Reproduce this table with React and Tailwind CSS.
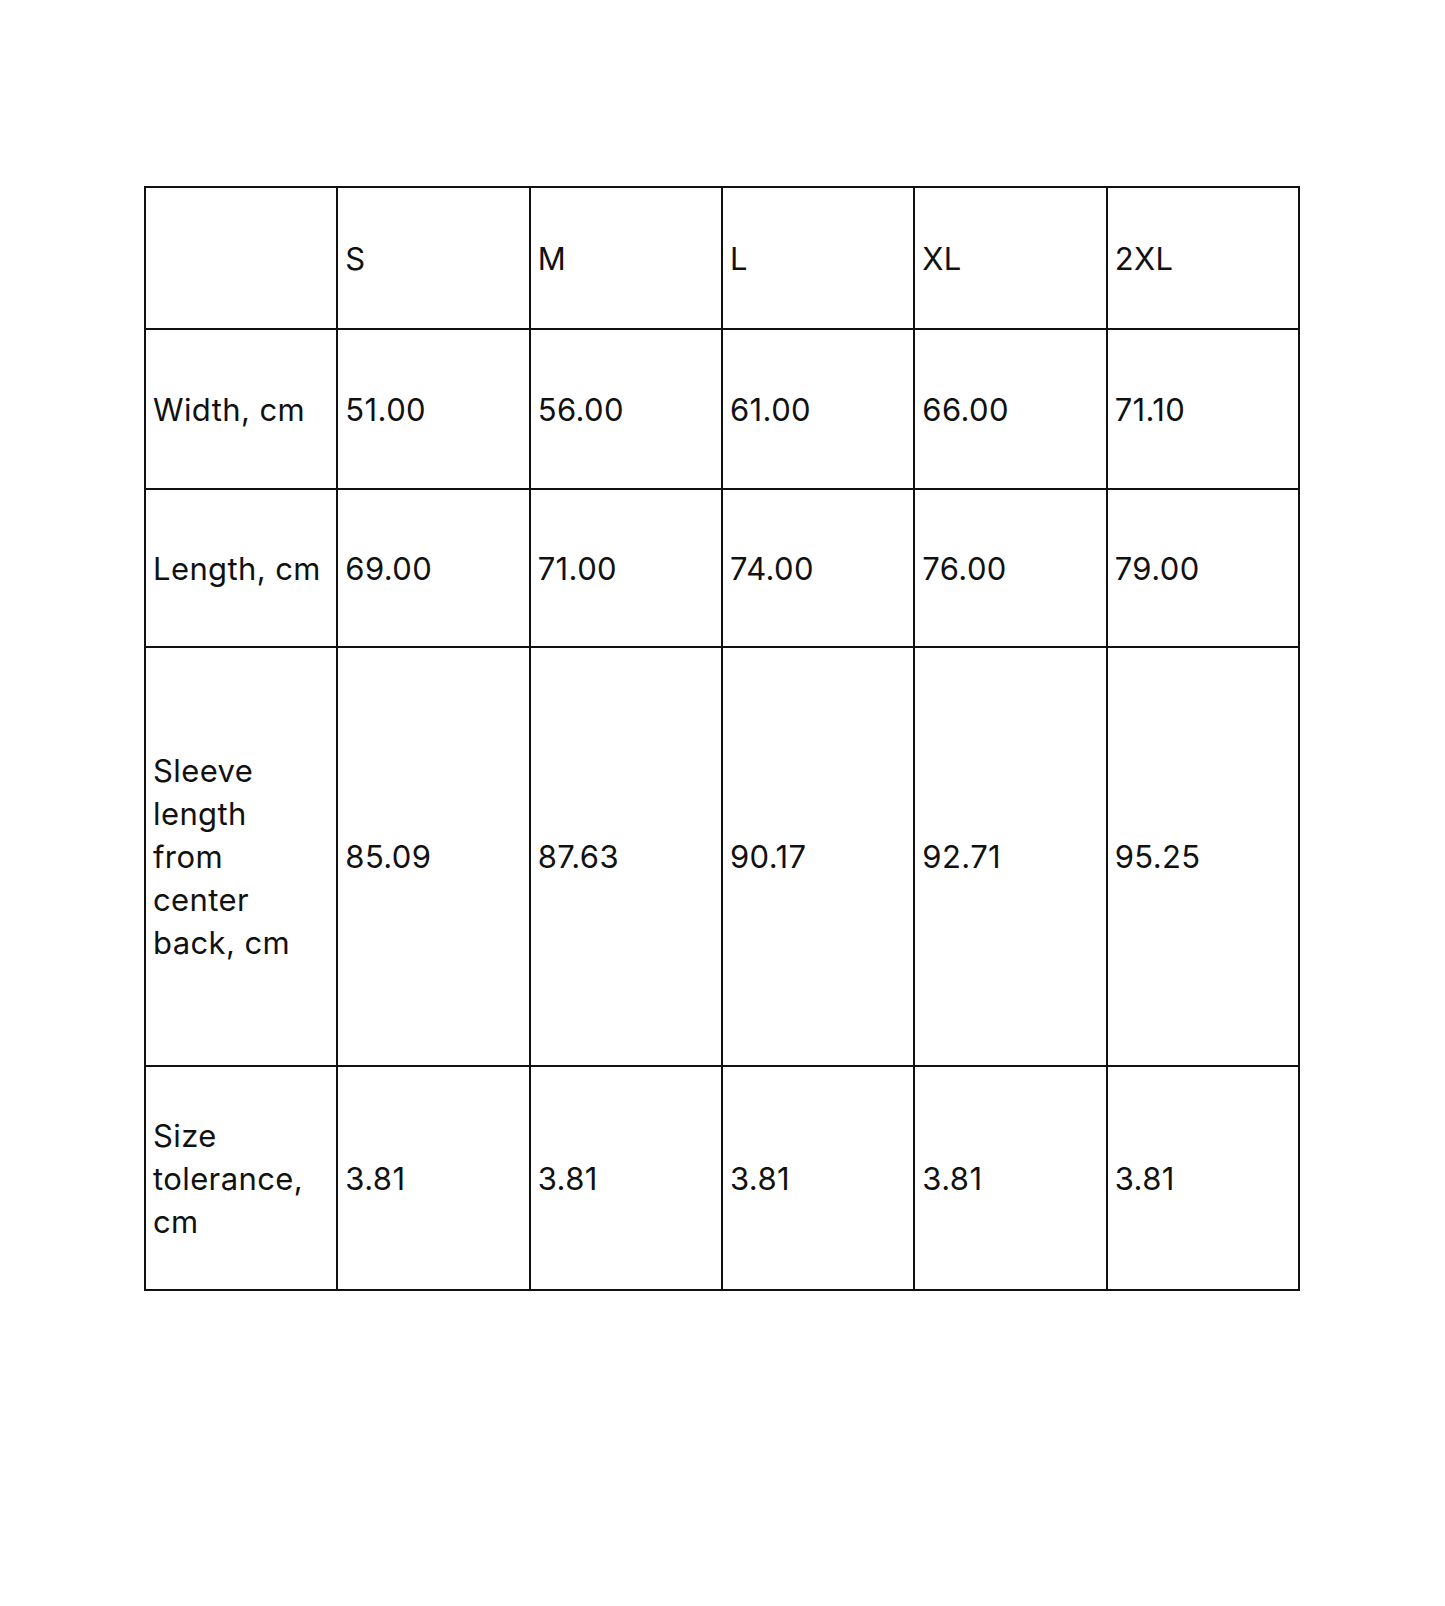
const headers = ["", "S", "M", "L", "XL", "2XL"];

const rows = [
  { h: "h-[158px]", label: "Width, cm", values: ["51.00", "56.00", "61.00", "66.00", "71.10"] },
  { h: "h-[156px]", label: "Length, cm", values: ["69.00", "71.00", "74.00", "76.00", "79.00"] },
  {
    h: "h-[417px]",
    label: (
      <>
        Sleeve
        <br />
        length
        <br />
        from
        <br />
        center
        <br />
        back, cm
      </>
    ),
    values: ["85.09", "87.63", "90.17", "92.71", "95.25"],
  },
  {
    h: "h-[222px]",
    label: (
      <>
        Size
        <br />
        tolerance,
        <br />
        cm
      </>
    ),
    values: ["3.81", "3.81", "3.81", "3.81", "3.81"],
  },
];

function Cell({ children, h }) {
  return (
    <div className={`bg-white flex items-center pl-[7px] ${h}`}>
      <div className="leading-[43px]">{children}</div>
    </div>
  );
}

export default function App() {
  return (
    <div
      className="w-[1445px] h-[1606px] bg-white text-[#111] text-[31px] tracking-[0.4px] pt-[186px] pl-[144px]"
      style={{ fontFamily: 'Inter, "Noto Sans", sans-serif' }}
    >
      <div className="w-[1156px] grid grid-cols-6 gap-[2px] p-[2px] bg-[#111]">
        {headers.map((t, i) => (
          <Cell key={"h" + i} h="h-[140px]">
            {t}
          </Cell>
        ))}
        {rows.map((r, ri) => (
          <>
            <Cell key={"l" + ri} h={r.h}>
              {r.label}
            </Cell>
            {r.values.map((v, vi) => (
              <Cell key={ri + "-" + vi} h={r.h}>
                {v}
              </Cell>
            ))}
          </>
        ))}
      </div>
    </div>
  );
}
